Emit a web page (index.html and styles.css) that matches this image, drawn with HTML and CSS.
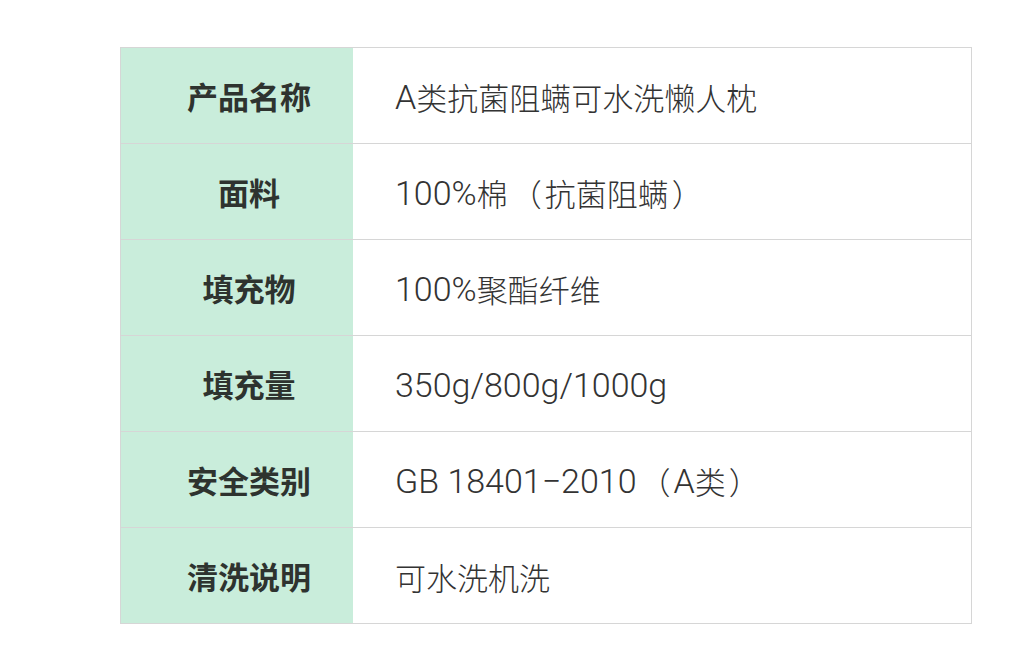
FILE: index.html
```html
<!DOCTYPE html>
<html lang="zh">
<head>
<meta charset="utf-8">
<link rel="stylesheet" href="styles.css">
</head>
<body>
<div class="page">
  <div class="spec">
    <div class="row"><div class="label">产品名称</div><div class="value"><span class="en">A</span>类抗菌阻螨可水洗懒人枕</div></div>
    <div class="row"><div class="label">面料</div><div class="value"><span class="en">100%</span>棉<span class="paren">（</span>抗菌阻螨<span class="paren">）</span></div></div>
    <div class="row"><div class="label">填充物</div><div class="value"><span class="en">100%</span>聚酯纤维</div></div>
    <div class="row"><div class="label">填充量</div><div class="value"><span class="en">350g/800g/1000g</span></div></div>
    <div class="row"><div class="label">安全类别</div><div class="value"><span class="en">GB 18401−2010</span><span class="paren">（</span><span class="en">A</span>类<span class="paren">）</span></div></div>
    <div class="row"><div class="label">清洗说明</div><div class="value">可水洗机洗</div></div>
  </div>
</div>
</body>
</html>
```
FILE: styles.css
```css
html, body {
  margin: 0;
  padding: 0;
  background: #ffffff;
}
.page {
  width: 1033px;
  height: 648px;
  padding: 47px 0 0 120px;
  box-sizing: border-box;
}
.spec {
  width: 852px;
  border: 1px solid #d6d6d6;
  box-sizing: border-box;
}
.row {
  display: grid;
  grid-template-columns: 232px 1fr;
  height: 96px;
  border-top: 1px solid #d6d6d6;
  box-sizing: border-box;
}
.row:first-child {
  border-top: none;
  height: 95px;
}
.label {
  background: #c9eddb;
  display: flex;
  align-items: center;
  justify-content: center;
  padding-left: 24px;
  font-family: "Noto Sans CJK SC", sans-serif;
  font-weight: 700;
  font-size: 31px;
  color: #2e332f;
}
.value {
  display: flex;
  align-items: center;
  padding-left: 42px;
  padding-top: 2px;
  font-family: Roboto, "Noto Sans CJK SC", sans-serif;
  font-size: 31px;
  font-weight: 300;
  color: #333333;
  white-space: pre;
}
.en {
  font-size: 34px;
}
.paren {
  margin: 0 3px;
}
```
